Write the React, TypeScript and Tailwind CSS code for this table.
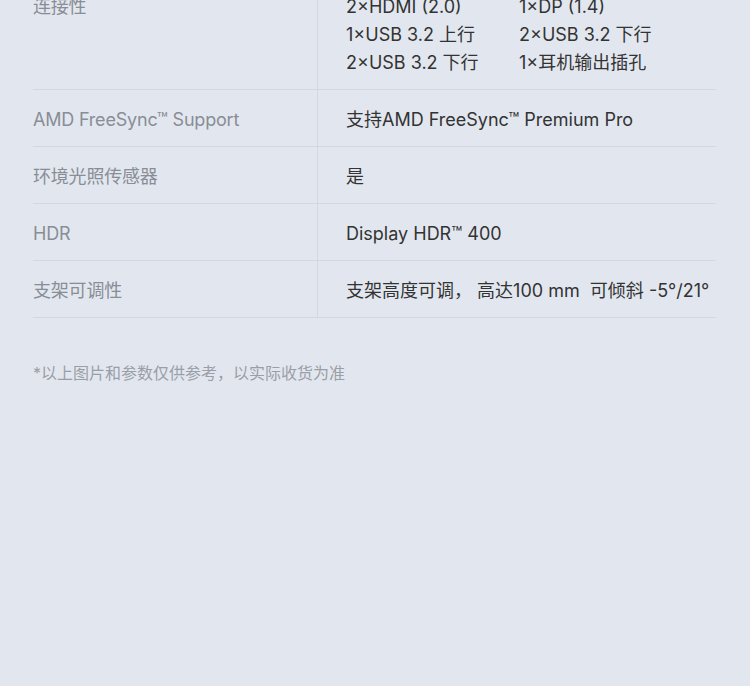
import React from "react";

const rows = [
  { label: "AMD FreeSync™ Support", value: "支持AMD FreeSync™ Premium Pro" },
  { label: "环境光照传感器", value: "是" },
  { label: "HDR", value: "Display HDR™ 400" },
  { label: "支架可调性", value: "支架高度可调， 高达100 mm  可倾斜 -5°/21°" },
];

const ports = [
  ["2×HDMI (2.0)", "1×DP (1.4)"],
  ["1×USB 3.2 上行", "2×USB 3.2 下行"],
  ["2×USB 3.2 下行", "1×耳机输出插孔"],
];

export default function App() {
  return (
    <div
      className="w-[750px] h-[686px] overflow-hidden bg-[#e2e7ef] px-[33px]"
      style={{ fontFamily: "Inter, 'Noto Sans CJK SC', sans-serif" }}
    >
      <div className="mt-[-23px] w-[683px]">
        {/* 连接性 */}
        <div className="flex border-b border-[#d3d8e0]">
          <div className="w-[285px] shrink-0 border-r border-[#d3d8e0] pt-[16px] pb-[12px] text-[18px] leading-[28px] text-[#898d96] tracking-[-0.2px]">
            连接性
          </div>
          <div className="pl-[28px] pt-[16px] pb-[12px] text-[18px] leading-[28px] text-[#333]">
            {ports.map(([a, b], i) => (
              <div key={i} className="flex">
                <span className="w-[173px]">{a}</span>
                <span>{b}</span>
              </div>
            ))}
          </div>
        </div>

        {rows.map((r) => (
          <div key={r.label} className="flex border-b border-[#d3d8e0]">
            <div className="w-[285px] shrink-0 border-r border-[#d3d8e0] pt-[16px] pb-[12px] text-[18px] leading-[28px] text-[#898d96] tracking-[-0.2px]">
              {r.label}
            </div>
            <div className="pl-[28px] pt-[16px] pb-[12px] text-[18px] leading-[28px] text-[#333] whitespace-pre">
              {r.value}
            </div>
          </div>
        ))}
      </div>

      <p className="mt-[44px] text-[16px] leading-[22px] text-[#9a9ea7]">
        *以上图片和参数仅供参考，以实际收货为准
      </p>
    </div>
  );
}
